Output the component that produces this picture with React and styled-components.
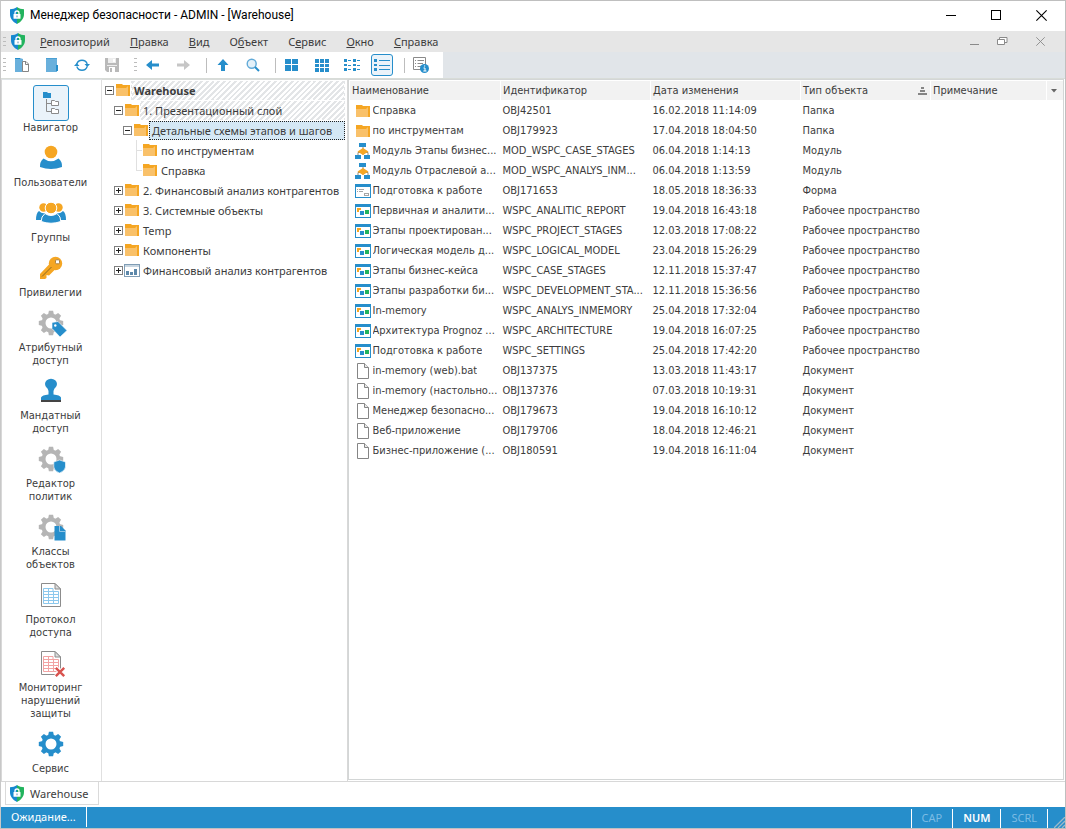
import React, { useState } from 'react';
import styled, { createGlobalStyle } from 'styled-components';

const UI_FONT = '"Noto Sans", "Open Sans", sans-serif';
const LIST_FONT = '"DejaVu Sans Condensed", "DejaVu Sans", sans-serif';
const BLUE = '#268ecb';
const ORANGE = '#f5a623';

const GlobalStyle = createGlobalStyle`
    * {
        box-sizing: border-box;
    }
    body {
        margin: 0;
        background: #fff;
        color: #3c3c3c;
        font-family: ${UI_FONT};
        font-size: 11px;
    }
    button {
        font: inherit;
        color: inherit;
        background: none;
        border: 0;
        padding: 0;
        margin: 0;
    }
    svg {
        display: block;
        flex: none;
    }
    ul {
        list-style: none;
        margin: 0;
        padding: 0;
    }
`;

const Window = styled.div`
    display: flex;
    flex-direction: column;
    min-height: 100vh;
    border: 1px solid #bfbfbf;
    border-left-color: #c8c8c8;
`;

const TitleBar = styled.header`
    display: flex;
    align-items: center;
    height: 30px;
    padding: 0 18px 2px 8px;
    background: #fff;
`;

const Title = styled.h1`
    flex: 1;
    margin: 0 0 0 5px;
    font-family: Roboto, ${UI_FONT};
    font-size: 12px;
    font-weight: 400;
    line-height: 16px;
    color: #000;
`;

const WindowButtons = styled.div`
    display: flex;
    align-items: center;
    gap: ${props => props.$gap}px;
`;

const MenuBar = styled.nav`
    display: flex;
    align-items: center;
    height: 21px;
    padding: 0 20px 0 2px;
    background: #e6e6e6;
`;

const MenuLogo = styled.span`
    margin-left: 4px;
`;

const MenuList = styled.ul`
    flex: 1;
    display: flex;
    gap: 20px;
    margin-left: 14px;
`;

const MenuItem = styled.button`
    display: block;
    line-height: 16px;
    white-space: nowrap;
`;

const Grip = styled.span`
    width: 3px;
    height: ${props => props.$height}px;
    background: repeating-linear-gradient(to bottom, #bcbcbc 0 1px, transparent 1px 4px);
`;

const ToolbarArea = styled.div`
    display: flex;
    height: 27px;
    background: #e1e5e9;
    border-bottom: 1px solid #d8dcd8;
`;

const Toolbar = styled.div`
    display: flex;
    align-items: center;
    padding: 0 6px 0 2px;
    background: #fff;
`;

const ToolGroup = styled.div`
    display: flex;
    align-items: center;
    margin: 0 1px;

    & + & {
        margin-left: 6px;
    }
`;

const ToolButton = styled.button`
    display: flex;
    align-items: center;
    justify-content: center;
    width: 22px;
    height: 22px;
    margin: 0 4px;
    border: 1px solid ${props => props.$active ? BLUE : 'transparent'};
    border-radius: 3px;
    background: ${props => props.$active ? '#eaf3fa' : 'none'};
`;

const Separator = styled.span`
    width: 1px;
    height: 15px;
    margin: 0 1px 0 7px;
    background: #bdbdbd;
`;

const Workspace = styled.div`
    flex: 1;
    display: flex;
    min-height: 0;
    border-bottom: 1px solid #d8d8d8;
`;

const Sidebar = styled.nav`
    width: 101px;
    padding: 5px 3px 0 1px;
    border-left: 1px solid #d8d8d8;
    border-right: 1px solid #e0e0e0;
    border-top: 1px solid #dfe3e7;
    font-family: ${LIST_FONT};
`;

const SideItem = styled.button`
    display: flex;
    flex-direction: column;
    align-items: center;
    width: 100%;
    margin-bottom: 6px;
    line-height: 13px;
`;

const SideIcon = styled.span`
    width: 36px;
    height: 36px;
    border: 1px solid ${props => props.$active ? BLUE : 'transparent'};
    border-radius: 3px;
    background: ${props => props.$active ? '#eaf3fa' : 'none'};

    svg {
        margin: -1px;
    }
`;

const SideLabel = styled.span`
    white-space: pre-line;
    text-align: center;
`;

const TreePane = styled.section`
    width: 246px;
    padding: 0 2px 0 3px;
    border-top: 1px solid #d9dcda;
    border-right: 1px solid #d8d8d8;
`;

const TreeRow = styled.div`
    display: flex;
    align-items: center;
    height: 20px;
    padding-left: ${props => props.$level * 9}px;
`;

const Toggle = styled.button`
    display: block;
    width: 9px;
    height: 9px;
    margin-right: 1px;
`;

const TreeStub = styled.span`
    width: 10px;
    height: 20px;
    background: linear-gradient(#e0e0e0, #e0e0e0) 4px 10px / 6px 1px no-repeat,
        linear-gradient(#e0e0e0, #e0e0e0) 4px 0 / 1px ${props => props.$last ? 10 : 20}px no-repeat;
`;

const TreeLabel = styled.button`
    flex: 1;
    height: 19px;
    padding-left: 2px;
    line-height: 17px;
    text-align: left;
    white-space: nowrap;
    font-weight: ${props => props.$bold ? 700 : 400};
    border: 1px ${props => props.$selected ? 'dotted #222' : 'solid transparent'};
    background: ${props => {
        if (props.$selected) return '#d5e8f5';
        if (props.$hatched) return 'repeating-linear-gradient(135deg, #e3e5e7 0 2px, #fff 2px 4px)';
        return 'none';
    }};
`;

const ListPane = styled.section`
    flex: 1;
    min-width: 0;
    margin: 0 1px 1px 0;
    border: 1px solid #d3d6d6;
`;

const ObjectTable = styled.table`
    width: 100%;
    table-layout: fixed;
    border-collapse: collapse;
    font-family: ${LIST_FONT};
    line-height: 14px;
`;

const Column = styled.col`
    width: ${props => props.$width ? `${props.$width}px` : 'auto'};
`;

const HeadCell = styled.th`
    height: 20px;
    padding: 0 3px 0 2px;
    border: 1px solid #fff;
    border-width: 1px 0 1px 1px;
    background: #f2f2f2;
    background-clip: padding-box;
    font-weight: 400;
    text-align: left;
`;

const HeadContent = styled.div`
    display: flex;
    align-items: center;
    justify-content: space-between;
`;

const ListCell = styled.td`
    height: 20px;
    padding: 0 1px 0 2px;
    overflow: hidden;
    text-overflow: ellipsis;
    white-space: nowrap;
`;

const NameContent = styled.div`
    display: flex;
    align-items: center;
    gap: 2px;
    padding-left: 3px;
`;

const NameText = styled.span`
    overflow: hidden;
    text-overflow: ellipsis;
`;

const TabBar = styled.div`
    display: flex;
    height: 25px;
    padding-left: 4px;
`;

const Tab = styled.button`
    display: flex;
    align-items: center;
    gap: 5px;
    height: 23px;
    padding: 0 10px 0 3px;
    border: 1px solid #dadada;
    border-top: 0;
`;

const StatusBar = styled.footer`
    display: flex;
    align-items: stretch;
    height: 21px;
    background: ${BLUE};
    color: #fff;
    line-height: 20px;
`;

const StatusText = styled.span`
    flex: 1;
`;

const StatusMessage = styled.span`
    display: inline-block;
    padding: 0 10px;
    border-right: 1px solid #fff;
`;

const KeyState = styled.span`
    margin-top: 2px;
    padding: 0 10px;
    border-left: 1px solid #fff;
    line-height: 17px;
    font-weight: ${props => props.$on ? 600 : 400};
    color: ${props => props.$on ? '#fff' : '#7cbce4'};
`;

const SizeGrip = styled.span`
    display: flex;
    align-items: flex-end;
    width: 18px;
    margin-top: 2px;
    padding-left: 6px;
    border-left: 1px solid #fff;
`;

const ShieldLogo = () => (
    <svg width="16" height="17" viewBox="0 0 16 17">
        <path d="M8 0 C6 1.6 3.5 2.1 1 2.2 V7 C1 11.5 3.7 14.8 8 17Z" fill="#1688cf" />
        <path d="M8 0 C10 1.6 12.5 2.1 15 2.2 V7 C15 11.5 12.3 14.8 8 17Z" fill="#22b35e" />
        <path d="M6 7.5 V6 a2 2 0 0 1 4 0 V7.5" fill="none" stroke="#fff" strokeWidth="1.3" />
        <rect x="4.5" y="7" width="7" height="4.8" rx=".5" fill="#fff" />
        <path d="M8 8.5v1.8" stroke="#5b8db0" />
    </svg>
);

const Minimize = ({ width }) => (
    <svg width={width} height="11" viewBox={`0 0 ${width} 11`}><path d={`M0 ${width > 9 ? 5.5 : 8.5}H${width}`} stroke="currentColor" /></svg>
);

const Maximize = () => (
    <svg width="10" height="10" viewBox="0 0 10 10"><rect x=".5" y=".5" width="9" height="9" fill="none" stroke="#000" /></svg>
);

const Restore = () => (
    <svg width="11" height="9" viewBox="0 0 11 9">
        <path d="M2.5 2V.5H10V5.5H8M.5 2.5H7.5V7.5H.5Z" fill="#fff" stroke="#8a8a8a" />
    </svg>
);

const Close = ({ size }) => (
    <svg width={size} height={size} viewBox="0 0 10 10"><path d="M.3.3L9.7 9.7M9.7.3L.3 9.7" stroke="currentColor" strokeWidth="1" /></svg>
);

const WindowButton = styled.button`
    color: ${props => props.$muted ? '#8a8a8a' : '#000'};
    ${props => props.$muted && '&:last-child { margin-left: 10px; }'}
`;

// Tool icons share a 16px grid
const toolIcons = {
    open: (
        <>
            <path d="M1 1H6L9 2V15H1Z" fill="#69b0dc" />
            <path d="M1 1.5H6" stroke={BLUE} />
            <path d="M8.5 4.5H12L14.5 7V14.5H8.5Z" fill="#fff" stroke="#858585" />
            <path d="M11.5 4.5V7.5H14.5" fill="none" stroke="#858585" />
        </>
    ),
    book: (
        <>
            <path d="M2 1H13V15H2Z" fill="#69b0dc" />
            <path d="M2 1.5H13" stroke="#4a9fd3" />
            <path d="M12 8H14V14H12Z" fill={BLUE} />
        </>
    ),
    refresh: (
        <>
            <path d="M2.8 7A5.5 5.5 0 0 1 13.2 7M13.2 9.5A5.5 5.5 0 0 1 2.8 9.5" fill="none" stroke={BLUE} strokeWidth="1.4" />
            <path d="M10.5 7H16L13.3 10ZM0 9H5.5L2.7 6Z" fill={BLUE} />
        </>
    ),
    save: (
        <>
            <path d="M1 1H15V15H3L1 13Z" fill="#b9b9b9" />
            <path d="M4 1H12V6H4ZM3 8H13V9H3Z" fill="#ededed" />
            <path d="M9 2h2v3H9ZM5 10H11V15H5Z" fill="#fff" />
            <path d="M6 11h2v4H6Z" fill="#b9b9b9" />
        </>
    ),
    back: <path d="M1 8L7 3V6.5H14V9.5H7V13Z" fill={BLUE} />,
    forward: <path d="M15 8L9 3V6.5H2V9.5H9V13Z" fill="#c6c6c6" />,
    up: <path d="M8 2L13.5 8H10V14H6V8H2.5Z" fill={BLUE} />,
    search: (
        <>
            <circle cx="6.7" cy="6.7" r="4.5" fill="#e4f1f9" stroke="#62aad8" strokeWidth="1.4" />
            <path d="M10 10L14 14" stroke={BLUE} strokeWidth="2" />
        </>
    ),
    large: <path d="M1 2H7V7H1ZM8 2H14V7H8ZM1 8H7V14H1ZM8 8H14V14H8Z" fill={BLUE} />,
    small: <path d="M1 2H5V6H1ZM6 2H10V6H6ZM11 2H15V6H11ZM1 7H5V10H1ZM6 7H10V10H6ZM11 7H15V10H11ZM1 11H5V15H1ZM6 11H10V15H6ZM11 11H15V15H11Z" fill={BLUE} />,
    list: (
        <>
            <path d="M0 2H3V5H0ZM0 7H3V9H0ZM0 11H3V14H0ZM9 2H12V5H9ZM9 7H12V9H9ZM9 11H12V14H9Z" fill={BLUE} />
            <path d="M4 3.5H7M4 8.5H7M4 12.5H7M13 3.5H16M13 8.5H16M13 12.5H16" stroke={BLUE} />
        </>
    ),
    details: (
        <>
            <path d="M0 2H3V5H0ZM0 7H3V9H0ZM0 11H3V14H0Z" fill={BLUE} />
            <path d="M5 3.5H16M5 8.5H16M5 12.5H16" stroke={BLUE} />
        </>
    ),
    info: (
        <>
            <path d="M.5.5H12.5V12.5H.5Z" fill="#fff" stroke="#8a8a8a" />
            <path d="M2 3.5H3M4.5 3.5H11M2 6.5H3M4.5 6.5H10M2 9.5H3M4.5 9.5H8" stroke="#8a8a8a" />
            <circle cx="11.5" cy="11.5" r="4.5" fill={BLUE} />
            <path d="M10.5 11H12V14M10.3 14h3.2M11 9h1.2" fill="none" stroke="#fff" />
        </>
    ),
};

const ToolIcon = ({ name }) => (
    <svg width="16" height="16" viewBox="0 0 16 16">{toolIcons[name]}</svg>
);

const Gear = ({ color }) => (
    <g transform="translate(18 18)">
        <circle r="7.5" fill="none" stroke={color} strokeWidth="4" />
        {[0, 45, 90, 135, 180, 225, 270, 315].map(a => (
            <path key={a} d="M-2.9 -8.5L-2.1 -12.2H2.1L2.9 -8.5Z" fill={color} transform={`rotate(${a})`} />
        ))}
    </g>
);

const Sheet = ({ color }) => (
    <>
        <path d="M8.5 6.5H22L27.5 12V29.5H8.5Z" fill="#fff" stroke="#8c8c8c" />
        <path d="M22 6.5V12H27.5Z" fill="#ddd" stroke="#8c8c8c" />
        <path d="M10.5 11.5H20V14.5H25.5V26.5H10.5ZM10.5 14.5H20M10.5 17.5H25.5M10.5 20.5H25.5M10.5 23.5H25.5M15.5 11.5V26.5M20.5 14.5V26.5" fill="none" stroke={color} />
    </>
);

const sideIcons = {
    navigator: (
        <>
            <path d="M10 7H14L15 8H18V13H10Z" fill={BLUE} />
            <path d="M13.5 14V26.5H18M13.5 18.5H18" fill="none" stroke="#8b8b8b" />
            <path d="M18.5 15.5H21.5L22.5 16.5H25.5V20.5H18.5ZM18.5 23.5H21.5L22.5 24.5H25.5V28.5H18.5Z" fill="#fff" stroke="#8b8b8b" />
        </>
    ),
    user: (
        <>
            <circle cx="18" cy="12" r="6.3" fill={ORANGE} />
            <path d="M10.5 18.5Q18 24 25.5 18.5Q29.5 21.5 29 27Q18 31 7 27Q6.5 21.5 10.5 18.5Z" fill={BLUE} />
        </>
    ),
    groups: (
        <>
            <circle cx="10.5" cy="12.5" r="4.2" fill={ORANGE} />
            <circle cx="25.5" cy="12.5" r="4.2" fill={ORANGE} />
            <path d="M6 16Q9 19 12 18L9 25H3Q3 18 6 16ZM30 16Q27 19 24 18L27 25H33Q33 18 30 16Z" fill={BLUE} />
            <circle cx="18" cy="13" r="5.8" fill={ORANGE} stroke="#fff" />
            <path d="M12 18.5Q18 22.5 24 18.5Q28 21.5 27.8 26.5Q18 30 8.2 26.5Q8 21.5 12 18.5Z" fill={BLUE} stroke="#fff" />
        </>
    ),
    key: (
        <>
            <circle cx="22.5" cy="13.5" r="6.7" fill={ORANGE} />
            <path d="M16.5 14L22 19.5L16 25.5L13.5 25V28L12 29H7V24Z" fill={ORANGE} />
            <path d="M9 26.5L18.5 17" stroke="#8b6a22" />
            <rect x="22.5" y="9.8" width="4" height="4" rx="1" fill="#fff" stroke="#aa8040" />
        </>
    ),
    attribute: (
        <>
            <Gear color="#b5b5b5" />
            <path d="M19 17.5L25 16.5L34 25.5L27 32L19 23.5Z" fill={BLUE} stroke="#fff" strokeWidth=".6" />
            <circle cx="22.3" cy="20.5" r="1.2" fill="#fff" />
        </>
    ),
    stamp: (
        <>
            <ellipse cx="18" cy="11" rx="6" ry="5.2" fill={BLUE} />
            <path d="M14 14H22L20.5 18V21.5Q27 22 28 24.5V27.5H8V24.5Q9 22 15.5 21.5V18Z" fill={BLUE} />
            <rect x="8" y="27" width="20" height="2" fill="#444" />
        </>
    ),
    policy: (
        <>
            <Gear color="#b5b5b5" />
            <path d="M26.5 19L32.5 21V26Q32 30 26.5 32Q21 30 20.8 26V21Z" fill={BLUE} stroke="#fff" strokeWidth=".6" />
        </>
    ),
    classes: (
        <>
            <Gear color="#b5b5b5" />
            <path d="M21.5 17H28L32.5 21.5V31.5H21.5Z" fill={BLUE} />
            <path d="M26.5 17V22.5H32" fill="none" stroke="#8fc5e7" />
        </>
    ),
    protocol: <Sheet color="#8cc8ed" />,
    monitoring: (
        <>
            <Sheet color="#f2a3a3" />
            <path d="M23 23L31 31M31 23L23 31" stroke="#fff" strokeWidth="4.5" />
            <path d="M22.8 22.8L31.2 31.2M31.2 22.8L22.8 31.2" stroke="#d9534f" strokeWidth="2.4" />
        </>
    ),
    service: <Gear color={BLUE} />,
};

// 16x16 object icons used by both the tree and the list
const objectIcons = {
    folder: (
        <>
            <path d="M1 2H7L8 3H15V14H1Z" fill={ORANGE} />
            <path d="M1 6H11L13 4V14H1Z" fill="#f9c16a" />
        </>
    ),
    module: (
        <>
            <path d="M8 4V12M3 12V9.5H13V12" fill="none" stroke="#9b8c70" />
            <path d="M4 0H11V4H4ZM0 12H6V16H0ZM9 12H15V16H9Z" fill={BLUE} />
            <path d="M2.5 8.5L8 5L13.5 8.5L8 12Z" fill={ORANGE} />
        </>
    ),
    form: (
        <>
            <rect x=".5" y="1.5" width="15" height="13" fill="#fff" stroke={BLUE} />
            <path d="M0 1H16V4H0Z" fill={BLUE} />
            <path d="M2 6.5H3M4 6.5H9M2 8.5H3M4 8.5H8" stroke="#a5a5a5" />
            <rect x="9.5" y="10.5" width="4" height="2" fill="none" stroke="#a5a5a5" />
        </>
    ),
    workspace: (
        <>
            <rect x=".5" y="1.5" width="15" height="13" fill="#fff" stroke={BLUE} />
            <path d="M0 1H16V4H0Z" fill={BLUE} />
            <path d="M2 5H6V7H4V9H2Z" fill={ORANGE} />
            <path d="M5 8H9V12H5Z" fill={BLUE} />
            <path d="M10 7H14V11H10Z" fill="#22b35e" />
        </>
    ),
    document: (
        <>
            <path d="M2.5.5H9.5L13.5 4.5V15.5H2.5Z" fill="#fff" stroke="#858585" />
            <path d="M9.5.5V4.5H13.5" fill="#e8e8e8" stroke="#858585" />
        </>
    ),
    report: (
        <>
            <rect x=".5" y="2.5" width="15" height="12" fill="#fff" stroke="#7f9db5" />
            <path d="M1 3H15V5H1Z" fill="#c8d6e1" />
            <path d="M2 9H5V13H2ZM6 10H9V13H6ZM10 7H13V13H10Z" fill="#5d88aa" />
        </>
    ),
};

const ObjectIcon = ({ name }) => (
    <svg width="16" height="16" viewBox="0 0 16 16">{objectIcons[name]}</svg>
);

const menu = [
    ['', 'Р', 'епозиторий'],
    ['', 'П', 'равка'],
    ['', 'В', 'ид'],
    ['О', 'б', 'ъект'],
    ['С', 'е', 'рвис'],
    ['', 'О', 'кно'],
    ['', 'С', 'правка'],
];

const sections = [
    ['navigator', 'Навигатор'],
    ['user', 'Пользователи'],
    ['groups', 'Группы'],
    ['key', 'Привилегии'],
    ['attribute', 'Атрибутный\nдоступ'],
    ['stamp', 'Мандатный\nдоступ'],
    ['policy', 'Редактор\nполитик'],
    ['classes', 'Классы\nобъектов'],
    ['protocol', 'Протокол\nдоступа'],
    ['monitoring', 'Мониторинг\nнарушений\nзащиты'],
    ['service', 'Сервис'],
];

const tree = [
    { level: 0, open: true, icon: 'folder', text: 'Warehouse', bold: true, hatched: true },
    { level: 1, open: true, icon: 'folder', text: '1. Презентационный слой', hatched: true },
    { level: 2, open: true, icon: 'folder', text: 'Детальные схемы этапов и шагов' },
    { level: 3, leaf: true, icon: 'folder', text: 'по инструментам' },
    { level: 3, leaf: true, last: true, icon: 'folder', text: 'Справка' },
    { level: 1, icon: 'folder', text: '2. Финансовый анализ контрагентов' },
    { level: 1, icon: 'folder', text: '3. Системные объекты' },
    { level: 1, icon: 'folder', text: 'Temp' },
    { level: 1, icon: 'folder', text: 'Компоненты' },
    { level: 1, icon: 'report', text: 'Финансовый анализ контрагентов' },
];

const WS = 'Рабочее пространство';
const objects = [
    ['folder', 'Справка', 'OBJ42501', '16.02.2018 11:14:09', 'Папка'],
    ['folder', 'по инструментам', 'OBJ179923', '17.04.2018 18:04:50', 'Папка'],
    ['module', 'Модуль Этапы бизнес...', 'MOD_WSPC_CASE_STAGES', '06.04.2018 1:14:13', 'Модуль'],
    ['module', 'Модуль Отраслевой а...', 'MOD_WSPC_ANALYS_INM...', '06.04.2018 1:13:59', 'Модуль'],
    ['form', 'Подготовка к работе', 'OBJ171653', '18.05.2018 18:36:33', 'Форма'],
    ['workspace', 'Первичная и аналити...', 'WSPC_ANALITIC_REPORT', '19.04.2018 16:43:18', WS],
    ['workspace', 'Этапы проектирован...', 'WSPC_PROJECT_STAGES', '12.03.2018 17:08:22', WS],
    ['workspace', 'Логическая модель д...', 'WSPC_LOGICAL_MODEL', '23.04.2018 15:26:29', WS],
    ['workspace', 'Этапы бизнес-кейса', 'WSPC_CASE_STAGES', '12.11.2018 15:37:47', WS],
    ['workspace', 'Этапы разработки би...', 'WSPC_DEVELOPMENT_STA...', '12.11.2018 15:36:56', WS],
    ['workspace', 'In-memory', 'WSPC_ANALYS_INMEMORY', '25.04.2018 17:32:04', WS],
    ['workspace', 'Архитектура Prognoz ...', 'WSPC_ARCHITECTURE', '19.04.2018 16:07:25', WS],
    ['workspace', 'Подготовка к работе', 'WSPC_SETTINGS', '25.04.2018 17:42:20', WS],
    ['document', 'in-memory (web).bat', 'OBJ137375', '13.03.2018 11:43:17', 'Документ'],
    ['document', 'in-memory (настольно...', 'OBJ137376', '07.03.2018 10:19:31', 'Документ'],
    ['document', 'Менеджер безопасно...', 'OBJ179673', '19.04.2018 16:10:12', 'Документ'],
    ['document', 'Веб-приложение', 'OBJ179706', '18.04.2018 12:46:21', 'Документ'],
    ['document', 'Бизнес-приложение (...', 'OBJ180591', '19.04.2018 16:11:04', 'Документ'],
];

const ToggleMark = ({ open }) => (
    <svg width="9" height="9" viewBox="0 0 9 9">
        <rect x=".5" y=".5" width="8" height="8" fill="#fff" stroke="#808080" />
        <path d={open ? 'M2 4.5H7' : 'M2 4.5H7M4.5 2V7'} stroke="#222" />
    </svg>
);

const Tools = ({ names, view, onPick }) => names.map(name => (
    <ToolButton key={name} aria-label={name} $active={view === name} onClick={() => onPick && onPick(name)}>
        <ToolIcon name={name} />
    </ToolButton>
));

const App = () => {
    const [section, setSection] = useState('navigator');
    const [view, setView] = useState('details');
    const [selected, setSelected] = useState(2);

    return (
        <>
            <GlobalStyle />
            <Window>
                <TitleBar>
                    <ShieldLogo />
                    <Title>Менеджер безопасности - ADMIN - [Warehouse]</Title>
                    <WindowButtons $gap={35}>
                        <WindowButton aria-label="Minimize"><Minimize width={10} /></WindowButton>
                        <WindowButton aria-label="Maximize"><Maximize /></WindowButton>
                        <WindowButton aria-label="Close"><Close size={11} /></WindowButton>
                    </WindowButtons>
                </TitleBar>
                <MenuBar>
                    <Grip $height={10} />
                    <MenuLogo><ShieldLogo /></MenuLogo>
                    <MenuList>
                        {menu.map(([before, key, after]) => (
                            <li key={key + after}><MenuItem>{before}<u>{key}</u>{after}</MenuItem></li>
                        ))}
                    </MenuList>
                    <WindowButtons $gap={18}>
                        <WindowButton $muted aria-label="Minimize document"><Minimize width={9} /></WindowButton>
                        <WindowButton $muted aria-label="Restore document"><Restore /></WindowButton>
                        <WindowButton $muted aria-label="Close document"><Close size={9} /></WindowButton>
                    </WindowButtons>
                </MenuBar>
                <ToolbarArea>
                    <Toolbar>
                        <Grip $height={14} />
                        <ToolGroup><Tools names={['open', 'book', 'refresh', 'save']} /></ToolGroup>
                        <ToolGroup>
                            <Grip $height={14} />
                            <ToolGroup><Tools names={['back', 'forward']} /></ToolGroup>
                            <Separator />
                            <Tools names={['up', 'search']} />
                            <Separator />
                            <Tools names={['large', 'small', 'list', 'details']} view={view} onPick={setView} />
                            <Separator />
                            <Tools names={['info']} />
                        </ToolGroup>
                    </Toolbar>
                </ToolbarArea>
                <Workspace>
                    <Sidebar>
                        {sections.map(([id, label]) => (
                            <SideItem key={id} onClick={() => setSection(id)}>
                                <SideIcon $active={section === id}>
                                    <svg width="36" height="36" viewBox="0 0 36 36">{sideIcons[id]}</svg>
                                </SideIcon>
                                <SideLabel>{label}</SideLabel>
                            </SideItem>
                        ))}
                    </Sidebar>
                    <TreePane>
                        <ul>
                            {tree.map((node, i) => (
                                <li key={i}>
                                    <TreeRow $level={node.level}>
                                        {node.leaf
                                            ? <TreeStub $last={node.last} />
                                            : <Toggle aria-label={node.text}><ToggleMark open={node.open} /></Toggle>}
                                        <ObjectIcon name={node.icon} />
                                        <TreeLabel
                                            $bold={node.bold}
                                            $hatched={node.hatched}
                                            $selected={selected === i}
                                            onClick={() => setSelected(i)}
                                        >
                                            {node.text}
                                        </TreeLabel>
                                    </TreeRow>
                                </li>
                            ))}
                        </ul>
                    </TreePane>
                    <ListPane>
                        <ObjectTable>
                            <colgroup>
                                <Column $width={151} />
                                <Column $width={150} />
                                <Column $width={150} />
                                <Column $width={130} />
                                <Column />
                                <Column $width={17} />
                            </colgroup>
                            <thead>
                                <tr>
                                    <HeadCell>Наименование</HeadCell>
                                    <HeadCell>Идентификатор</HeadCell>
                                    <HeadCell>Дата изменения</HeadCell>
                                    <HeadCell>
                                        <HeadContent>
                                            Тип объекта
                                            <svg width="9" height="8" viewBox="0 0 9 8">
                                                <path d="M3 0H6V2H3ZM2 3H7V5H2ZM0 6H9V8H0Z" fill="#858585" />
                                            </svg>
                                        </HeadContent>
                                    </HeadCell>
                                    <HeadCell>Примечание</HeadCell>
                                    <HeadCell>
                                        <HeadContent>
                                            <svg width="10" height="4" viewBox="0 0 10 4"><path d="M2 0H8L5 3.5Z" fill="#666" /></svg>
                                        </HeadContent>
                                    </HeadCell>
                                </tr>
                            </thead>
                            <tbody>
                                {objects.map(([icon, name, id, date, type]) => (
                                    <tr key={id}>
                                        <ListCell>
                                            <NameContent>
                                                <ObjectIcon name={icon} />
                                                <NameText>{name}</NameText>
                                            </NameContent>
                                        </ListCell>
                                        <ListCell>{id}</ListCell>
                                        <ListCell>{date}</ListCell>
                                        <ListCell>{type}</ListCell>
                                        <ListCell />
                                        <ListCell />
                                    </tr>
                                ))}
                            </tbody>
                        </ObjectTable>
                    </ListPane>
                </Workspace>
                <TabBar>
                    <Tab><ShieldLogo />Warehouse</Tab>
                </TabBar>
                <StatusBar>
                    <StatusText><StatusMessage>Ожидание...</StatusMessage></StatusText>
                    <KeyState>CAP</KeyState>
                    <KeyState $on>NUM</KeyState>
                    <KeyState>SCRL</KeyState>
                    <SizeGrip>
                        <svg width="11" height="11" viewBox="0 0 11 11">
                            <path d="M0 11L11 0M4 11L11 4M8 11L11 8" stroke="#9db8c8" strokeWidth="1.3" />
                        </svg>
                    </SizeGrip>
                </StatusBar>
            </Window>
        </>
    );
};

export default App;
